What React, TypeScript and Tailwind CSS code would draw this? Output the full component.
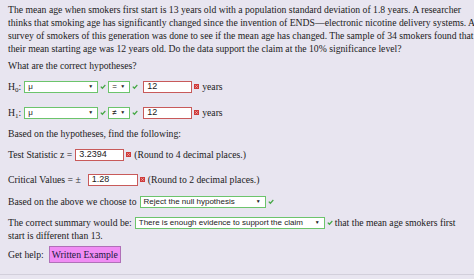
import React from "react";

function Check() {
  return (
    <svg className="mx-[2px] h-[6px] w-[6px] shrink-0" viewBox="0 0 10 10">
      <path d="M0.5 5.2 L2.2 3.6 L4 5.4 L8.2 1 L9.6 2.5 L4 8.6 Z" fill="#45a845" />
    </svg>
  );
}

function Cross() {
  return (
    <svg className="mx-[2px] h-[5px] w-[5px] shrink-0" viewBox="0 0 10 10">
      <rect x="0" y="0" width="10" height="10" fill="#cf3a3a" />
      <path d="M2.5 2.5 L7.5 7.5 M7.5 2.5 L2.5 7.5" stroke="#f0b0b0" strokeWidth="1.6" />
    </svg>
  );
}

function Select({ value, width }: { value: string; width: string }) {
  return (
    <span
      className={`inline-flex h-[12px] ${width} items-center justify-between border border-[#6cc46c] bg-white pl-[3px] pr-[4px] align-middle font-['Liberation_Sans',Arial,sans-serif] text-[8px] leading-none text-[#222]`}
    >
      <span className="whitespace-nowrap">{value}</span>
      <span className="text-[5px] text-[#222]">▼</span>
    </span>
  );
}

function Field({ value, width }: { value: string; width: string }) {
  return (
    <span
      className={`inline-flex h-[12px] ${width} items-center border border-[#c85a5a] bg-white pl-[3px] align-middle font-['Liberation_Sans',Arial,sans-serif] text-[9px] leading-none text-[#222]`}
    >
      {value}
    </span>
  );
}

function Sub({ n }: { n: string }) {
  return (
    <span>
      H<span className="relative top-[2px] text-[7px] leading-none">{n}</span>:
    </span>
  );
}

export default function App() {
  return (
    <div className="h-[279px] w-[474px] bg-[#e8e5f0] font-['Liberation_Serif','Times_New_Roman',serif] text-[9.7px] leading-[13px] text-[#222]">
      <div className="h-[275px] border-b border-[#d2cfdb] px-[8px] pt-[3px]">
        <p className="whitespace-nowrap">
          <span className="block">
            The mean age when smokers first start is 13 years old with a population standard deviation of 1.8 years. A researcher
          </span>
          <span className="block">
            thinks that smoking age has significantly changed since the invention of ENDS—electronic nicotine delivery systems. A
          </span>
          <span className="block">
            survey of smokers of this generation was done to see if the mean age has changed. The sample of 34 smokers found that
          </span>
          <span className="block">
            their mean starting age was 12 years old. Do the data support the claim at the 10% significance level?
          </span>
        </p>

        <p className="mt-[4px]">What are the correct hypotheses?</p>

        <div className="mt-[8px] flex h-[13px] items-center">
          <span className="mr-[3px]">
            <Sub n="0" />
          </span>
          <Select value="μ" width="w-[74px]" />
          <Check />
          <Select value="=" width="w-[22px]" />
          <Check />
          <span className="ml-[3px]" />
          <Field value="12" width="w-[49px]" />
          <Cross />
          <span className="ml-[1px]">years</span>
        </div>

        <div className="mt-[13px] flex h-[13px] items-center">
          <span className="mr-[3px]">
            <Sub n="1" />
          </span>
          <Select value="μ" width="w-[74px]" />
          <Check />
          <Select value="≠" width="w-[22px]" />
          <Check />
          <span className="ml-[3px]" />
          <Field value="12" width="w-[49px]" />
          <Cross />
          <span className="ml-[1px]">years</span>
        </div>

        <p className="mt-[8px]">Based on the hypotheses, find the following:</p>

        <div className="mt-[8px] flex h-[13px] items-center">
          <span className="mr-[3px]">Test Statistic z =</span>
          <Field value="3.2394" width="w-[49px]" />
          <Cross />
          <span className="ml-[1px]">(Round to 4 decimal places.)</span>
        </div>

        <div className="mt-[12px] flex h-[13px] items-center">
          <span className="mr-[7px]">Critical Values = ±</span>
          <Field value="1.28" width="w-[50px]" />
          <Cross />
          <span className="ml-[1px]">(Round to 2 decimal places.)</span>
        </div>

        <div className="mt-[9px] flex h-[13px] items-center">
          <span className="mr-[3px]">Based on the above we choose to</span>
          <Select value="Reject the null hypothesis" width="w-[126px]" />
          <Check />
        </div>

        <div className="mt-[8px]">
          <div className="flex h-[13px] items-center">
            <span className="mr-[3px]">The correct summary would be:</span>
            <Select value="There is enough evidence to support the claim" width="w-[190px]" />
            <Check />
            <span className="whitespace-nowrap">that the mean age smokers first</span>
          </div>
          <p>start is different than 13.</p>
        </div>

        <div className="mt-[4px] flex items-center">
          <span className="mr-[5px]">Get help:</span>
          <span className="border border-[#b070b8] bg-[#f08cf4] px-[2px] py-[1px] leading-[13px] text-[#1a1a40]">
            Written Example
          </span>
        </div>
      </div>
    </div>
  );
}
